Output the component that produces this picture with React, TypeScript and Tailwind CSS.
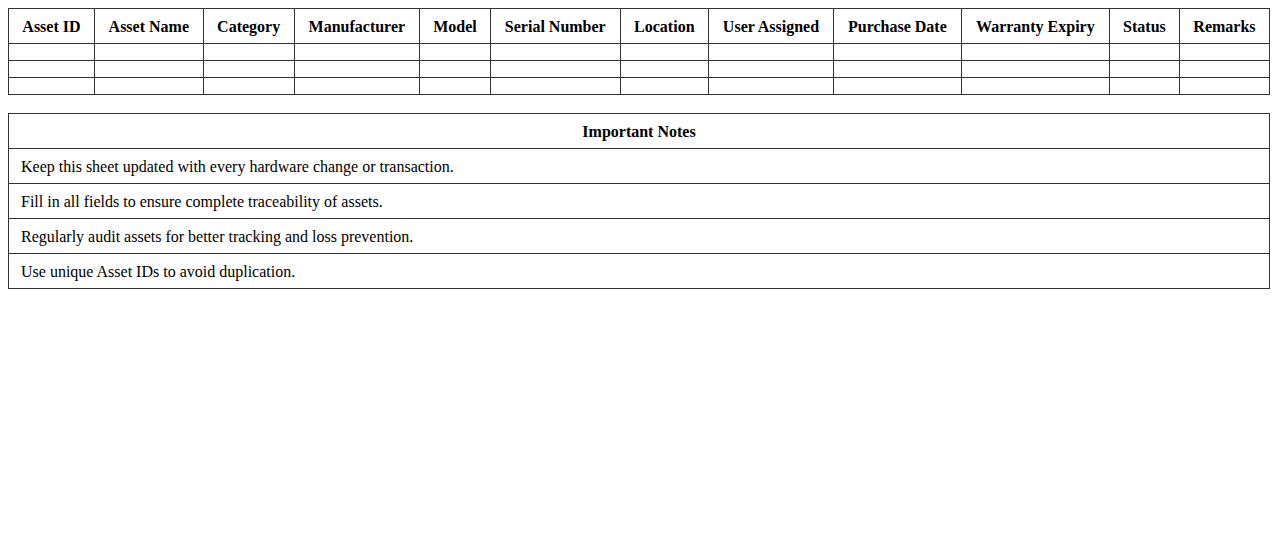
const headers = [
  "Asset ID",
  "Asset Name",
  "Category",
  "Manufacturer",
  "Model",
  "Serial Number",
  "Location",
  "User Assigned",
  "Purchase Date",
  "Warranty Expiry",
  "Status",
  "Remarks",
];

const notes = [
  "Keep this sheet updated with every hardware change or transaction.",
  "Fill in all fields to ensure complete traceability of assets.",
  "Regularly audit assets for better tracking and loss prevention.",
  "Use unique Asset IDs to avoid duplication.",
];

export default function App() {
  return (
    <div className="m-2 bg-white text-black text-base" style={{ fontFamily: '"Liberation Serif", "Times New Roman", serif' }}>
      <table className="w-full border-collapse">
        <thead>
          <tr>
            {headers.map((h) => (
              <th key={h} className="border border-[#333] px-3 pt-[9px] pb-[7px] text-center font-bold leading-[18px]">
                {h}
              </th>
            ))}
          </tr>
        </thead>
        <tbody>
          {[0, 1, 2].map((r) => (
            <tr key={r}>
              {headers.map((h) => (
                <td key={h} className="border border-[#333] px-3 py-2"></td>
              ))}
            </tr>
          ))}
        </tbody>
      </table>

      <table className="mt-[18px] w-full border-collapse">
        <thead>
          <tr>
            <th className="border border-[#333] px-3 pt-[9px] pb-[7px] text-center font-bold leading-[18px]">Important Notes</th>
          </tr>
        </thead>
        <tbody>
          {notes.map((n) => (
            <tr key={n}>
              <td className="border border-[#333] px-3 pt-[9px] pb-[7px] text-left leading-[18px]">{n}</td>
            </tr>
          ))}
        </tbody>
      </table>
    </div>
  );
}
